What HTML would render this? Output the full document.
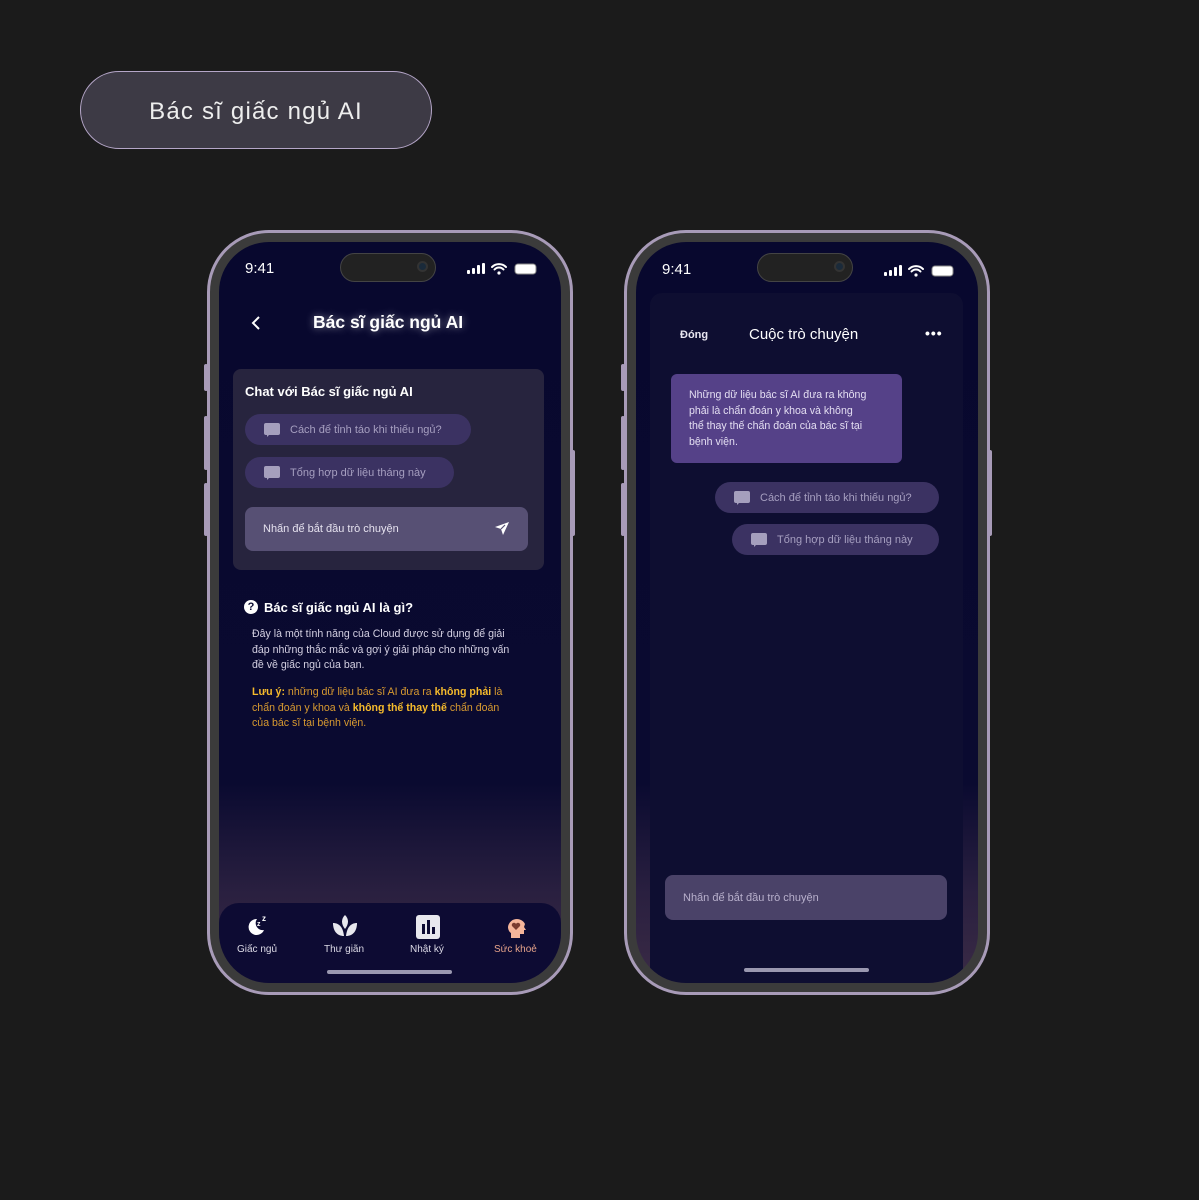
<!DOCTYPE html>
<html><head><meta charset="utf-8"><style>
*{margin:0;padding:0;box-sizing:border-box}
body{width:1199px;height:1200px;background:#1b1b1b;position:relative;overflow:hidden;font-family:"Liberation Sans","DejaVu Sans",sans-serif;color:#fff}
.abs{position:absolute}
.pill{left:80px;top:71px;width:352px;height:78px;border:1px solid #b5a6c8;border-radius:39px;background:#3d3a45;font-size:24px;letter-spacing:1.2px;text-align:center;line-height:80px;color:#eee}
.frame{width:366px;height:765px;border-radius:62px;border:3px solid #a89bb8;background:#3b3b3b}
.screen{left:9px;top:9px;width:342px;height:741px;border-radius:50px;overflow:hidden;background:linear-gradient(#08082e 0%,#0a0a30 73%,#2a2040 88%,#3a2a45 100%)}
.btn{background:#a89bb8;width:4px;border-radius:2px}
.island{width:96px;height:29px;border-radius:15px;background:#222;border:1px solid #444}
.cam{width:11px;height:11px;border-radius:50%;background:#1a2a3a;border:2px solid #333}
.t{font-size:11px;white-space:nowrap}
.chip{border-radius:16px;background:#3b3262;height:31px}
.chip .ic{position:absolute;left:19px;top:9px;width:16px;height:12px;background:#a59fbd;border-radius:2px}
.chip .ic:after{content:"";position:absolute;left:3px;top:11px;border-left:3px solid #a59fbd;border-bottom:3px solid transparent}
.chip span{position:absolute;left:45px;top:10px;font-size:11px;color:#a69fc0;white-space:nowrap}
.hi{height:4px;border-radius:2px;background:#9a98b0}
</style></head><body>
<div class="abs pill">Bác sĩ giấc ngủ AI</div>

<!-- LEFT PHONE -->
<div class="abs btn" style="left:204px;top:364px;height:27px"></div>
<div class="abs btn" style="left:204px;top:416px;height:54px"></div>
<div class="abs btn" style="left:204px;top:483px;height:53px"></div>
<div class="abs btn" style="left:571px;top:450px;height:86px"></div>
<div class="abs frame" style="left:207px;top:230px">
 <div class="abs screen">
  <div class="abs" style="left:26px;top:18px;font-size:15px">9:41</div>
  <div class="abs island" style="left:121px;top:11px"><div class="abs cam" style="left:76px;top:7px"></div></div>
  <svg class="abs" style="left:248px;top:20px" width="72" height="14" viewBox="0 0 72 14">
   <rect x="0" y="8" width="3" height="4" rx="1" fill="#fff"/><rect x="5" y="6" width="3" height="6" rx="1" fill="#fff"/><rect x="10" y="3" width="3" height="9" rx="1" fill="#fff"/><rect x="15" y="1" width="3" height="11" rx="1" fill="#fff"/>
   <path d="M25 5a10 10 0 0 1 14 0M27.5 7.5a6 6 0 0 1 9 0" stroke="#fff" stroke-width="2" fill="none" stroke-linecap="round"/><circle cx="32" cy="11" r="1.6" fill="#fff"/>
   <rect x="48" y="2" width="21" height="10" rx="3" fill="#fff" stroke="#888" stroke-width="1"/>
  </svg>
  <svg class="abs" style="left:31px;top:73px" width="12" height="16"><path d="M9 2 3 8l6 6" stroke="#fff" stroke-width="2" fill="none"/></svg>
  <div class="abs" style="left:94px;top:70px;font-size:17.5px;font-weight:bold;text-shadow:0 0 8px rgba(255,255,255,.5);white-space:nowrap">Bác sĩ giấc ngủ AI</div>

  <div class="abs" style="left:14px;top:127px;width:311px;height:201px;background:#27243e;border-radius:8px">
   <div class="abs" style="left:12px;top:15px;font-size:13px;font-weight:bold">Chat với Bác sĩ giấc ngủ AI</div>
   <div class="abs chip" style="left:12px;top:45px;width:226px"><div class="ic"></div><span>Cách để tỉnh táo khi thiếu ngủ?</span></div>
   <div class="abs chip" style="left:12px;top:88px;width:209px"><div class="ic"></div><span>Tổng hợp dữ liệu tháng này</span></div>
   <div class="abs" style="left:12px;top:138px;width:283px;height:44px;background:#575074;border-radius:8px">
    <div class="abs t" style="left:18px;top:16px;color:#e6e2ef">Nhấn để bắt đầu trò chuyện</div>
    <svg class="abs" style="left:249px;top:14px" width="16" height="16" viewBox="0 0 16 16"><path d="M15 1 1 6l6 2 2 6z" fill="#fff"/><path d="M7 8l4-4" stroke="#575074" stroke-width="1.2"/></svg>
   </div>
  </div>

  <div class="abs" style="left:25px;top:358px;width:14px;height:14px;border-radius:50%;background:#fff;color:#0a0a30;font-size:11px;font-weight:bold;text-align:center;line-height:14px">?</div>
  <div class="abs" style="left:45px;top:358px;font-size:13px;font-weight:bold">Bác sĩ giấc ngủ AI là gì?</div>
  <div class="abs" style="left:33px;top:385px;width:300px;font-size:10.6px;line-height:15.5px;color:#d4d0e2;white-space:nowrap">Đây là một tính năng của Cloud được sử dụng để giải<br>đáp những thắc mắc và gợi ý giải pháp cho những vấn<br>đề về giấc ngủ của bạn.</div>
  <div class="abs" style="left:33px;top:443px;width:300px;font-size:10.6px;line-height:15.5px;color:#d89a30;white-space:nowrap"><b style="color:#f6bb2c">Lưu ý:</b> những dữ liệu bác sĩ AI đưa ra <b style="color:#f6bb2c">không phải</b> là<br>chẩn đoán y khoa và <b style="color:#f6bb2c">không thể thay thế</b> chẩn đoán<br>của bác sĩ tại bệnh viện.</div>

  <div class="abs" style="left:0;top:661px;width:342px;height:80px;background:#0d0b33;border-radius:20px 20px 0 0">
   <svg class="abs" style="left:27px;top:11px" width="24" height="22" viewBox="0 0 24 22"><path d="M11 5a8 8 0 1 0 7 11 7 7 0 0 1-7-11z" fill="#fff"/><text x="11" y="12" font-size="7" font-weight="bold" fill="#fff" font-family="Liberation Sans">z</text><text x="16" y="7" font-size="8" font-weight="bold" fill="#fff" font-family="Liberation Sans">z</text></svg>
   <svg class="abs" style="left:113px;top:12px" width="26" height="22" viewBox="0 0 26 22"><path d="M13 0c4 4 4 9 0 14-4-5-4-10 0-14z" fill="#e8e8ee"/><path d="M1 8c6 0 10 4 11 13C5 21 1 16 1 8z" fill="#e8e8ee"/><path d="M25 8c-6 0-10 4-11 13 7 0 11-5 11-13z" fill="#e8e8ee"/></svg>
   <svg class="abs" style="left:197px;top:12px" width="24" height="24" viewBox="0 0 24 24"><rect x="0" y="0" width="24" height="24" rx="3" fill="#e8e8ee"/><rect x="6" y="9" width="3" height="10" fill="#0d0b33"/><rect x="11" y="5" width="3" height="14" fill="#0d0b33"/><rect x="16" y="12" width="3" height="7" fill="#0d0b33"/></svg>
   <svg class="abs" style="left:285px;top:12px" width="24" height="24" viewBox="0 0 24 24"><path d="M4 12a9 9 0 0 1 17-3l-1 3 2 3h-2v4h-4v4H7v-5c-2-1-3-4-3-6z" fill="#f5b59a"/><path d="M12 15l-4-4a2 2 0 0 1 4-2 2 2 0 0 1 4 2z" fill="#7a3c30"/></svg>
   <div class="abs t" style="left:18px;top:41px;font-size:10px;color:#dcdae6">Giấc ngủ</div>
   <div class="abs t" style="left:105px;top:41px;font-size:10px;color:#dcdae6">Thư giãn</div>
   <div class="abs t" style="left:191px;top:41px;font-size:10px;color:#dcdae6">Nhật ký</div>
   <div class="abs t" style="left:275px;top:41px;font-size:10px;color:#e6a38a">Sức khoẻ</div>
   <div class="abs hi" style="left:108px;top:67px;width:125px"></div>
  </div>
 </div>
</div>

<!-- RIGHT PHONE -->
<div class="abs btn" style="left:621px;top:364px;height:27px"></div>
<div class="abs btn" style="left:621px;top:416px;height:54px"></div>
<div class="abs btn" style="left:621px;top:483px;height:53px"></div>
<div class="abs btn" style="left:988px;top:450px;height:86px"></div>
<div class="abs frame" style="left:624px;top:230px">
 <div class="abs screen">
  <div class="abs" style="left:14px;top:51px;width:313px;height:700px;background:#0e0e31;border-radius:12px 12px 0 0"></div>
  <div class="abs" style="left:26px;top:19px;font-size:15px">9:41</div>
  <div class="abs island" style="left:121px;top:11px"><div class="abs cam" style="left:76px;top:7px"></div></div>
  <svg class="abs" style="left:248px;top:22px" width="72" height="14" viewBox="0 0 72 14">
   <rect x="0" y="8" width="3" height="4" rx="1" fill="#fff"/><rect x="5" y="6" width="3" height="6" rx="1" fill="#fff"/><rect x="10" y="3" width="3" height="9" rx="1" fill="#fff"/><rect x="15" y="1" width="3" height="11" rx="1" fill="#fff"/>
   <path d="M25 5a10 10 0 0 1 14 0M27.5 7.5a6 6 0 0 1 9 0" stroke="#fff" stroke-width="2" fill="none" stroke-linecap="round"/><circle cx="32" cy="11" r="1.6" fill="#fff"/>
   <rect x="48" y="2" width="21" height="10" rx="3" fill="#fff" stroke="#888" stroke-width="1"/>
  </svg>
  <div class="abs" style="left:44px;top:87px;font-size:11px;font-weight:bold;color:#e8e6f0">Đóng</div>
  <div class="abs" style="left:113px;top:84px;font-size:15px">Cuộc trò chuyện</div>
  <div class="abs" style="left:289px;top:83px;font-size:14px;font-weight:bold;letter-spacing:1px">•••</div>
  <div class="abs" style="left:35px;top:132px;width:231px;height:89px;background:#554188;border-radius:6px;padding:14px 18px;font-size:10.6px;line-height:15.5px;color:#e4def2;white-space:nowrap">Những dữ liệu bác sĩ AI đưa ra không<br>phải là chẩn đoán y khoa và không<br>thể thay thế chẩn đoán của bác sĩ tại<br>bệnh viện.</div>
  <div class="abs chip" style="left:79px;top:240px;width:224px"><div class="ic"></div><span>Cách để tỉnh táo khi thiếu ngủ?</span></div>
  <div class="abs chip" style="left:96px;top:282px;width:207px"><div class="ic"></div><span>Tổng hợp dữ liệu tháng này</span></div>
  <div class="abs" style="left:29px;top:633px;width:282px;height:45px;background:#4a4268;border-radius:8px"><div class="abs t" style="left:18px;top:17px;color:#b8b0cc">Nhấn để bắt đầu trò chuyện</div></div>
  <div class="abs hi" style="left:108px;top:726px;width:125px"></div>
 </div>
</div>
</body></html>
